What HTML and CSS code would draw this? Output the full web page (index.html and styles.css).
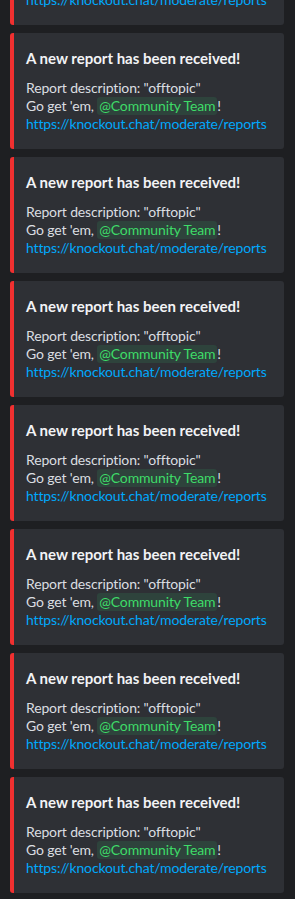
FILE: index.html
```html
<!DOCTYPE html>
<html lang="en">
<head>
    <meta charset="UTF-8">
    <meta name="viewport" content="width=device-width, initial-scale=1.0">
    <title>Reports</title>
    <link rel="stylesheet" href="styles.css">
</head>
<body>

<div class="feed" id="feed"></div>

<script>
    const reports = ["offtopic", "offtopic", "offtopic", "offtopic", "offtopic", "offtopic", "offtopic", "offtopic"];

    const feed = document.getElementById('feed');

    feed.innerHTML = reports.map(desc => `
        <div class="embed">
            <div class="embed-title">A new report has been received!</div>
            <div class="embed-desc">
                Report description: "${desc}"<br>
                Go get 'em, <span class="mention">@Community Team</span>!<br>
                <a class="link" href="#">https://knockout.chat/moderate/reports</a>
            </div>
        </div>
    `).join('');
</script>

</body>
</html>
```
FILE: styles.css
```css
body {
    margin: 0;
    background-color: #1e1f22;
    font-family: Lato, "Noto Sans", sans-serif;
    overflow: hidden;
}

.feed {
    display: flex;
    flex-direction: column;
    gap: 8px;
    margin-top: -91px;
    padding: 0 11px 0 10px;
}

.embed {
    background: #2e3035;
    border-left: 4px solid #f03030;
    border-radius: 3px;
    padding: 15px 16px 16px 12px;
}

.embed-title {
    font-size: 15px;
    font-weight: bold;
    line-height: 20px;
    color: #f2f3f5;
    white-space: nowrap;
}

.embed-desc {
    margin-top: 11px;
    font-size: 14px;
    line-height: 18px;
    letter-spacing: -0.15px;
    color: #dbdee1;
    white-space: nowrap;
}

.mention {
    display: inline-block;
    padding: 0 2px;
    border-radius: 3px;
    background: rgba(46, 204, 113, 0.12);
    color: #3edc68;
}

.link {
    color: #00a8fc;
    text-decoration: none;
}
```
